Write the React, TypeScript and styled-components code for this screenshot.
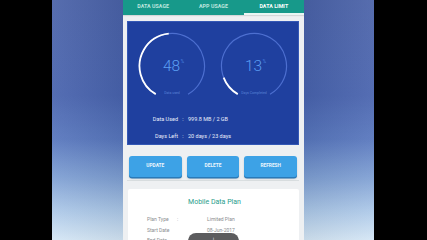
import React from 'react';
import styled, { createGlobalStyle } from 'styled-components';

const GlobalStyle = createGlobalStyle`
  html, body {
    margin: 0;
    padding: 0;
    background: #000;
    font-family: Roboto, "Liberation Sans", sans-serif;
  }
`;

const Frame = styled.div`
  width: 427px;
  height: 240px;
  display: flex;
  overflow: hidden;
  background: #000;
`;

const Letterbox = styled.div<{ $w: number }>`
  width: ${(p) => p.$w}px;
  flex-shrink: 0;
  background: #000;
`;

const BlurPanel = styled.div<{ $w: number; $flip?: boolean }>`
  width: ${(p) => p.$w}px;
  flex-shrink: 0;
  background:
    linear-gradient(
      ${(p) => (p.$flip ? 'to left' : 'to right')},
      rgba(255, 255, 255, 0.07),
      rgba(0, 0, 0, 0.06)
    ),
    linear-gradient(
      to bottom,
      #4a62a8 0%,
      #4863ae 40%,
      #5776bd 58%,
      #7e9fd3 74%,
      #acc8e8 88%,
      #d4e6f5 100%
    );
`;

const Phone = styled.div`
  width: 181px;
  flex-shrink: 0;
  position: relative;
  display: flex;
  flex-direction: column;
  background: #eef0f2;
  overflow: hidden;

  & > * {
    flex-shrink: 0;
  }
`;

const TabBar = styled.div`
  height: 15px;
  display: flex;
  background: #17998a;
  box-shadow: 0 1px 1px rgba(0, 0, 0, 0.1);
`;

const Tab = styled.div<{ $active?: boolean }>`
  flex: 1;
  display: flex;
  align-items: center;
  justify-content: center;
  padding-bottom: 1px;
  font-size: 5.3px;
  font-weight: 700;
  letter-spacing: 0.05px;
  color: ${(p) => (p.$active ? '#ffffff' : '#bfe6df')};
  border-bottom: 2px solid ${(p) => (p.$active ? '#e9f6f3' : 'transparent')};
  box-sizing: border-box;
`;

const Content = styled.div`
  display: flex;
  flex-direction: column;
  padding: 6px 5px 0 4px;

  & > * {
    flex-shrink: 0;
  }
`;

const UsageCard = styled.div`
  height: 124px;
  background: #1f409f;
  border: 1px solid #3458b5;
  box-sizing: border-box;
  display: flex;
  flex-direction: column;
  padding: 9px 0 0 9px;
`;

const GaugeRow = styled.div`
  display: flex;
  gap: 12px;
`;

const GaugeBox = styled.div`
  position: relative;
  width: 70px;
  height: 70px;
`;

const GaugeText = styled.div`
  position: absolute;
  inset: 0;
  display: flex;
  flex-direction: column;
  align-items: center;
`;

const Value = styled.div`
  margin-top: 28px;
  margin-left: 3px;
  display: flex;
  align-items: flex-start;
  color: #5b9ef2;
  font-size: 15.5px;
  font-weight: 300;
  line-height: 14px;
`;

const Percent = styled.span`
  font-size: 4.5px;
  line-height: 6px;
  margin-left: 0.5px;
`;

const GaugeLabel = styled.div`
  margin-top: 18px;
  font-size: 3.5px;
  color: #5a82d6;
`;

const StatList = styled.div`
  margin-top: 15px;
  display: grid;
  grid-template-columns: 32px 7px auto;
  row-gap: 10.5px;
  padding-left: 9px;
  font-size: 5.5px;
  color: #e8eefb;
  line-height: 6px;
`;

const StatKey = styled.span`
  text-align: right;
`;

const StatColon = styled.span`
  text-align: center;
  padding-left: 3px;
`;

const StatVal = styled.span`
  padding-left: 3px;
`;

const ButtonRow = styled.div`
  display: flex;
  gap: 5px;
  padding: 11px 2px 3px 2px;
  border-bottom: 1px solid #d9dee0;
`;

const ActionButton = styled.div`
  flex: 1;
  height: 21px;
  border-radius: 3px;
  background: #3da2e6;
  box-shadow: 0 1.5px 0 #2a7ab8, 0 2px 2px rgba(0, 0, 0, 0.15);
  display: flex;
  align-items: center;
  justify-content: center;
  padding-bottom: 2px;
  box-sizing: border-box;
  color: #eaf5fd;
  font-size: 4.8px;
  font-weight: 700;
`;

const PlanCard = styled.div`
  margin-top: 8px;
  margin-left: 1px;
  background: #ffffff;
  border-radius: 2px;
  height: 60px;
  display: flex;
  flex-direction: column;
  padding-top: 9px;
`;

const PlanTitle = styled.div`
  text-align: center;
  font-size: 7px;
  color: #2a9d8b;
  margin-bottom: 11px;
  padding-left: 2px;
`;

const PlanGrid = styled.div`
  display: grid;
  grid-template-columns: 30px 30px auto;
  row-gap: 5.5px;
  padding-left: 19px;
  font-size: 5px;
  line-height: 5px;
  color: #8a8d8f;
`;

const Toast = styled.div`
  position: absolute;
  left: 65px;
  bottom: -10px;
  width: 51px;
  height: 17px;
  border-radius: 8px;
  background: #5c5c5e;
  display: flex;
  justify-content: center;
  padding-top: 3px;
  box-sizing: border-box;
  color: #fff;
  font-size: 4px;
`;

interface GaugeProps {
  percent: number;
  label: string;
}

const R = 32.5;
const C = 2 * Math.PI * R;
const SPAN = 300 / 360;

const Gauge: React.FC<GaugeProps> = ({ percent, label }) => (
  <GaugeBox>
    <svg width="70" height="70" viewBox="0 0 70 70">
      <g transform="rotate(120 35 35)">
        <circle
          cx="35"
          cy="35"
          r={R}
          fill="none"
          stroke="#4d6fd0"
          strokeWidth="1.2"
          strokeDasharray={`${C * SPAN} ${C}`}
        />
        <circle
          cx="35"
          cy="35"
          r={R}
          fill="none"
          stroke="#ffffff"
          strokeWidth="1.8"
          strokeDasharray={`${(C * SPAN * percent) / 100} ${C}`}
        />
      </g>
    </svg>
    <GaugeText>
      <Value>
        {percent}
        <Percent>%</Percent>
      </Value>
      <GaugeLabel>{label}</GaugeLabel>
    </GaugeText>
  </GaugeBox>
);

const App: React.FC = () => (
  <>
    <GlobalStyle />
    <Frame>
      <Letterbox $w={52} />
      <BlurPanel $w={71} />
      <Phone>
        <TabBar>
          <Tab>DATA USAGE</Tab>
          <Tab>APP USAGE</Tab>
          <Tab $active>DATA LIMIT</Tab>
        </TabBar>
        <Content>
          <UsageCard>
            <GaugeRow>
              <Gauge percent={48} label="Data used" />
              <Gauge percent={13} label="Days Completed" />
            </GaugeRow>
            <StatList>
              <StatKey>Data Used</StatKey>
              <StatColon>:</StatColon>
              <StatVal>999.8 MB / 2 GB</StatVal>
              <StatKey>Days Left</StatKey>
              <StatColon>:</StatColon>
              <StatVal>20 days / 23 days</StatVal>
            </StatList>
          </UsageCard>
          <ButtonRow>
            <ActionButton>UPDATE</ActionButton>
            <ActionButton>DELETE</ActionButton>
            <ActionButton>REFRESH</ActionButton>
          </ButtonRow>
          <PlanCard>
            <PlanTitle>Mobile Data Plan</PlanTitle>
            <PlanGrid>
              <span>Plan Type</span>
              <span>:</span>
              <span>Limited Plan</span>
              <span>Start Date</span>
              <span />
              <span>08-Jun-2017</span>
              <span>End Date</span>
              <span />
              <span>23-Jun-2017</span>
            </PlanGrid>
          </PlanCard>
        </Content>
        <Toast>i</Toast>
      </Phone>
      <BlurPanel $w={70} $flip />
      <Letterbox $w={53} />
    </Frame>
  </>
);

export default App;
